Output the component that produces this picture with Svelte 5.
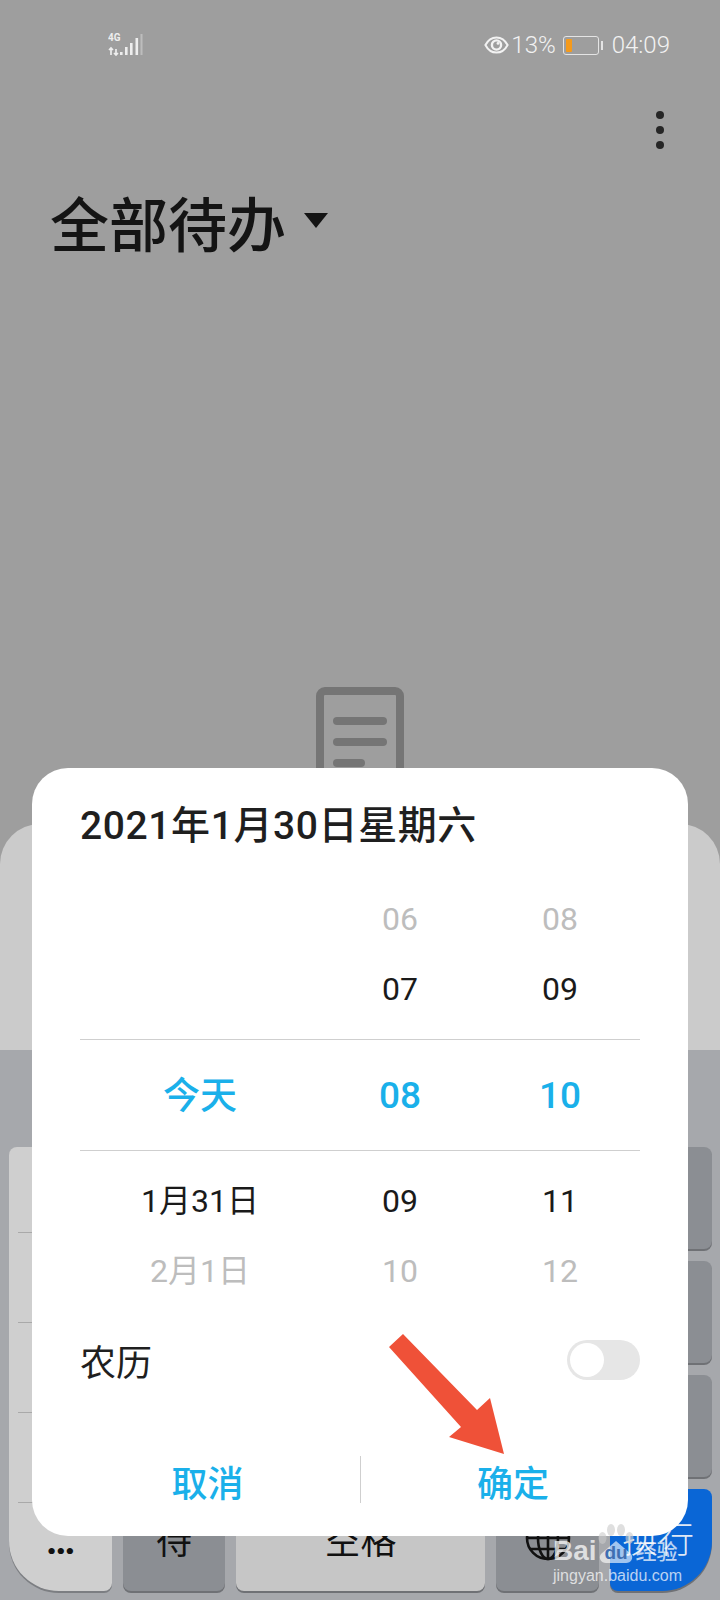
<script>
  // Wheel rows: date / hour / minute, top to bottom
  const wheel = [
    { date: '', hour: '06', min: '08', kind: 'faded' },
    { date: '', hour: '07', min: '09', kind: 'near' },
    { date: '今天', hour: '08', min: '10', kind: 'sel' },
    { date: '1月31日', hour: '09', min: '11', kind: 'near' },
    { date: '2月1日', hour: '10', min: '12', kind: 'faded' },
  ];
  const rightKeys = [0, 1, 2];
</script>

<div class="page">
  <header class="status">
    <div class="signal">
      <span class="net">4G</span>
      <svg width="36" height="22" viewBox="0 0 36 22" aria-hidden="true">
        <path d="M3 14v7M1 16l2-2 2 2M8 21v-6M6 19l2 2 2-2" fill="none" stroke="#eee" stroke-width="1.7" />
        <rect x="12" y="18" width="2.6" height="3" fill="#eee" />
        <rect x="17" y="13" width="2.6" height="8" fill="#eee" />
        <rect x="22" y="9" width="2.6" height="12" fill="#eee" />
        <rect x="27.5" y="4" width="2.6" height="17" fill="#eee" />
        <rect x="32.5" y="0" width="2" height="21" fill="#bdbdbd" />
      </svg>
    </div>
    <div class="status-right">
      <svg class="eye" width="25" height="18" viewBox="0 0 25 18" aria-hidden="true">
        <path d="M1.4 9C4 4 8 1.4 12.5 1.4S21 4 23.6 9C21 14 17 16.6 12.5 16.6S4 14 1.4 9Z" fill="none" stroke="#f2f2f2" stroke-width="2" />
        <circle cx="12.5" cy="9" r="4.6" fill="none" stroke="#f2f2f2" stroke-width="2.4" />
        <circle cx="14" cy="7.4" r="1.4" fill="#f2f2f2" />
      </svg>
      <span class="pct">13%</span>
      <div class="battery"><div class="charge"></div></div>
      <div class="nub"></div>
      <span class="time">04:09</span>
    </div>
  </header>

  <div class="toolbar">
    <div class="more"><i></i><i></i><i></i></div>
  </div>

  <div class="heading">
    <h1>全部待办</h1>
    <span class="caret"></span>
  </div>

  <div class="empty">
    <div class="doc">
      <i></i><i></i><i class="short"></i>
    </div>
  </div>

  <section class="sheet"></section>

  <section class="keyboard">
    <div class="grid">
      <div class="symbols">
        <div class="sym"></div>
        <div class="sym"></div>
        <div class="sym"></div>
        <div class="sym"></div>
        <div class="sym last">…</div>
      </div>
      {#each rightKeys as k, i}
        <div class="key dark right" style="grid-row: {i + 1}"></div>
      {/each}
      <div class="key dark bottom">待</div>
      <div class="key light bottom">空格</div>
      <div class="key dark bottom">
        <svg width="48" height="48" viewBox="0 0 48 48" aria-hidden="true">
          <g fill="none" stroke="#111" stroke-width="2.6">
            <circle cx="24" cy="24" r="21" />
            <ellipse cx="24" cy="24" rx="10" ry="21" />
            <path d="M24 3v42M3 24h42M6 13h36M6 35h36" />
          </g>
        </svg>
      </div>
      <div class="key enter bottom">换行</div>
    </div>
  </section>

  <div class="dialog">
    <h2>2021年1月30日星期六</h2>
    <div class="wheel">
      {#each wheel as row}
        <div class="row {row.kind}">
          <span>{row.date}</span>
          <span>{row.hour}</span>
          <span>{row.min}</span>
        </div>
      {/each}
    </div>
    <div class="lunar">
      <span>农历</span>
      <div class="toggle"><div class="knob"></div></div>
    </div>
    <div class="actions">
      <button type="button" class="cancel">取消</button>
      <div class="sep"></div>
      <button type="button" class="ok">确定</button>
    </div>
  </div>

  <!-- annotation arrow drawn over the screenshot -->
  <svg class="arrow" width="130" height="130" viewBox="385 1330 130 130" aria-hidden="true">
    <polygon points="403,1334 389,1347 461,1427 449,1437 504,1454 490,1398 477,1410" fill="#ef5138" />
  </svg>

  <div class="watermark">
    <div class="brand">
      <span class="bai">Bai</span>
      <svg width="36" height="44" viewBox="0 0 36 44" aria-hidden="true">
        <g fill="#c9c9c9" fill-opacity="0.6">
          <ellipse cx="4.5" cy="14" rx="4" ry="6" />
          <ellipse cx="13" cy="6" rx="4" ry="6" />
          <ellipse cx="23" cy="6" rx="4" ry="6" />
          <ellipse cx="31.5" cy="14" rx="4" ry="6" />
        </g>
        <path d="M18 17 3 30c-3 4 0 9 5 9h20c5 0 8-5 5-9Z" fill="#fff" fill-opacity="0.62" />
        <text x="18" y="35" text-anchor="middle" class="du">du</text>
      </svg>
      <span class="jy">经验</span>
    </div>
    <div class="site">jingyan.baidu.com</div>
  </div>
</div>

<style>
  :global(body) {
    margin: 0;
  }

  .page {
    position: relative;
    width: 720px;
    height: 1600px;
    overflow: hidden;
    display: flex;
    flex-direction: column;
    background: #9e9e9e;
    font-family: Roboto, "Noto Sans CJK SC", sans-serif;
  }

  /* status bar */
  .status {
    height: 90px;
    flex: none;
    display: flex;
    justify-content: space-between;
    align-items: flex-start;
    padding: 34px 50px 0 108px;
    box-sizing: border-box;
    color: #f2f2f2;
  }
  .signal {
    position: relative;
    width: 36px;
    height: 22px;
  }
  .signal svg {
    display: block;
  }
  .net {
    position: absolute;
    left: 0;
    top: -2px;
    font-size: 11px;
    font-weight: 700;
    line-height: 12px;
    color: #eee;
    transform: scaleX(0.9);
    transform-origin: left;
  }
  .status-right {
    display: flex;
    align-items: center;
    height: 22px;
    font-size: 24px;
    font-weight: 300;
    line-height: 22px;
  }
  .eye {
    margin-right: 2px;
  }
  .pct {
    margin-right: 7px;
  }
  .battery {
    width: 36px;
    height: 19px;
    box-sizing: border-box;
    border: 1.5px solid #e4e4e4;
    border-radius: 3px;
    padding: 2px;
  }
  .charge {
    width: 6px;
    height: 100%;
    background: #f59a1b;
    border-radius: 1px;
  }
  .nub {
    width: 2px;
    height: 9px;
    margin: 0 9px 0 2px;
    background: #e4e4e4;
  }

  /* toolbar + heading */
  .toolbar {
    height: 76px;
    flex: none;
    display: flex;
    justify-content: flex-end;
    padding-right: 56px;
  }
  .more {
    display: flex;
    flex-direction: column;
    gap: 7px;
    padding-top: 21px;
  }
  .more i {
    display: block;
    width: 8px;
    height: 8px;
    border-radius: 50%;
    background: #262626;
  }
  .heading {
    display: flex;
    align-items: center;
    padding: 16px 0 0 50px;
    height: 90px;
    flex: none;
  }
  h1 {
    margin: 0;
    font-size: 59px;
    font-weight: 500;
    line-height: 90px;
    color: #141414;
  }
  .caret {
    width: 0;
    height: 0;
    margin: 0 0 14px 18px;
    border-left: 12px solid transparent;
    border-right: 12px solid transparent;
    border-top: 15px solid #141414;
  }

  /* empty state icon, mostly covered by the dialog */
  .empty {
    flex: none;
    height: 0;
    padding-top: 415px;
    margin-bottom: -415px;
    display: flex;
    justify-content: center;
    box-sizing: content-box;
  }
  .doc {
    width: 88px;
    height: 160px;
    flex: none;
    box-sizing: border-box;
    border: 8px solid #757575;
    border-radius: 9px;
    padding: 22px 9px 0;
    display: flex;
    flex-direction: column;
    align-items: flex-start;
    gap: 13px;
  }
  .doc i {
    display: block;
    width: 54px;
    height: 8px;
    border-radius: 4px;
    background: #757575;
  }
  .doc i.short {
    width: 32px;
  }

  /* keyboard behind the dialog */
  .sheet {
    margin-top: auto;
    height: 226px;
    flex: none;
    background: #cbcbcb;
    border-radius: 40px 40px 0 0;
  }
  .keyboard {
    height: 550px;
    flex: none;
    box-sizing: border-box;
    padding: 97px 9px 0;
    background: #a6a8ac;
  }
  .grid {
    display: grid;
    grid-template-columns: 103px 102px 249px 103px 102px;
    grid-template-rows: repeat(4, 102px);
    column-gap: 11px;
    row-gap: 12px;
  }
  .symbols {
    grid-column: 1;
    grid-row: 1 / 5;
    background: #cfcfcf;
    border-radius: 8px 8px 8px 50px;
    box-shadow: 0 2px 0 #7c7e82;
    display: flex;
    flex-direction: column;
  }
  .sym {
    height: 90px;
    flex: none;
    box-sizing: border-box;
    margin-left: 9px;
    border-bottom: 1px solid #a9a9a9;
  }
  .sym:first-child {
    height: 86px;
  }
  .sym.last {
    height: auto;
    flex: 1;
    border: 0;
    margin: 0;
    font-size: 40px;
    font-weight: 700;
    line-height: 1;
    color: #111;
    text-align: center;
    padding-top: 18px;
  }
  .key {
    border-radius: 8px;
    box-shadow: 0 2px 0 #6f7175;
    display: flex;
    align-items: center;
    justify-content: center;
    font-size: 36px;
    color: #111;
  }
  .key.right {
    grid-column: 5;
  }
  .key.bottom {
    grid-row: 4;
    box-sizing: border-box;
    padding-bottom: 4px;
  }
  .dark {
    background: #8b8e93;
  }
  .light {
    background: #c6c6c6;
  }
  .key.bottom:nth-last-child(4) {
    grid-column: 2;
  }
  .key.bottom:nth-last-child(3) {
    grid-column: 3;
  }
  .key.bottom:nth-last-child(2) {
    grid-column: 4;
  }
  .enter {
    grid-column: 5;
    background: #0a66d6;
    color: #dfe8f5;
    font-weight: 300;
    border-radius: 8px 8px 50px 8px;
  }
  .key.enter {
    padding: 0 6px 6px 0;
  }

  /* date/time dialog */
  .dialog {
    position: absolute;
    left: 32px;
    top: 768px;
    width: 656px;
    height: 768px;
    box-sizing: border-box;
    padding: 0 48px;
    background: #fff;
    border-radius: 36px;
    color: #1a1a1a;
  }
  h2 {
    margin: 0;
    height: 116px;
    font-size: 39px;
    font-weight: 500;
    letter-spacing: 0.6px;
    line-height: 116px;
    white-space: nowrap;
    color: #1f1f1f;
  }
  .wheel {
    display: flex;
    flex-direction: column;
  }
  .row {
    height: 70px;
    flex: none;
    display: grid;
    grid-template-columns: 240px 160px 160px;
    align-items: center;
    text-align: center;
    font-size: 32px;
    line-height: 1;
    color: #1a1a1a;
  }
  .row.faded {
    color: #bdbdbd;
  }
  .row.sel {
    box-sizing: border-box;
    height: 112px;
    margin: 15px 0 15px;
    border-top: 1px solid #cfcfcf;
    border-bottom: 1px solid #cfcfcf;
    font-size: 37px;
    font-weight: 500;
    color: #1ab0ea;
  }
  .row.sel span:first-child {
    padding-top: 3px;
  }
  .lunar {
    display: flex;
    align-items: center;
    justify-content: space-between;
    margin-top: 34px;
    height: 40px;
    font-size: 36px;
    color: #1f1f1f;
  }
  .toggle {
    width: 73px;
    height: 40px;
    box-sizing: border-box;
    padding: 3px;
    border-radius: 20px;
    background: #e6e6e6;
  }
  .knob {
    width: 34px;
    height: 34px;
    border-radius: 50%;
    background: #fff;
  }
  .actions {
    display: flex;
    align-items: flex-start;
    height: 47px;
    margin: 76px -24px 0 -25px;
  }
  .actions button {
    flex: none;
    border: 0;
    padding: 0;
    margin-top: 6px;
    background: none;
    font: inherit;
    font-size: 36px;
    font-weight: 500;
    line-height: 47px;
    color: #1ab0ea;
  }
  .cancel {
    width: 305px;
  }
  .ok {
    width: 304px;
  }
  .sep {
    width: 1px;
    height: 47px;
    flex: none;
    background: #cfcfcf;
  }

  .arrow {
    position: absolute;
    left: 385px;
    top: 1330px;
  }

  /* baidu watermark over the corner */
  .watermark {
    position: absolute;
    left: 553px;
    top: 1524px;
    width: 130px;
    color: rgba(255, 255, 255, 0.72);
  }
  .brand {
    display: flex;
    align-items: flex-start;
    height: 44px;
  }
  .bai {
    font-family: "Liberation Sans", sans-serif;
    font-size: 28px;
    font-weight: 700;
    line-height: 34px;
    margin-top: 10px;
  }
  .brand svg {
    flex: none;
    margin-left: 1px;
  }
  .du {
    font-family: "Liberation Sans", sans-serif;
    font-size: 19px;
    font-weight: 700;
    fill: #3f6fb2;
  }
  .jy {
    font-size: 21px;
    font-weight: 500;
    line-height: 34px;
    margin: 11px 0 0 2px;
    white-space: nowrap;
  }
  .site {
    font-family: "Liberation Sans", sans-serif;
    font-size: 16px;
    line-height: 20px;
    margin-top: -2px;
    white-space: nowrap;
  }
</style>
